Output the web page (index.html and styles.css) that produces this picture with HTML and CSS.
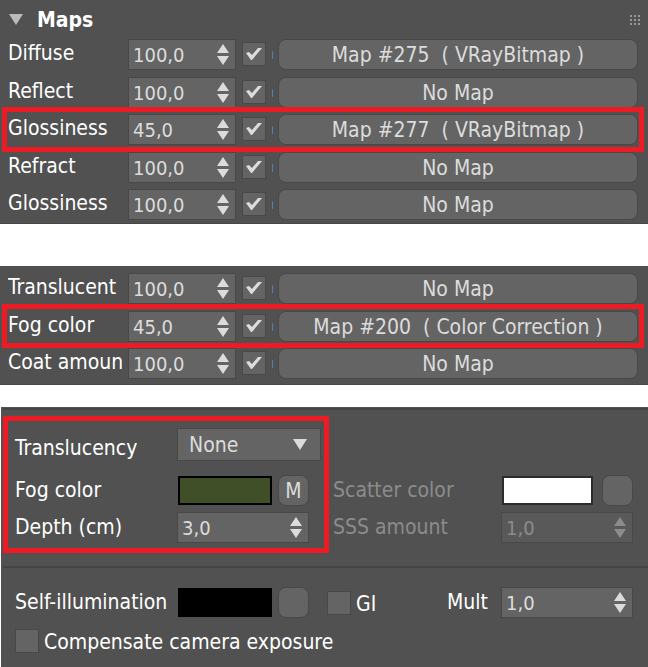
FILE: index.html
```html
<!DOCTYPE html>
<html lang="en">
<head>
<meta charset="utf-8">
<title>Material maps</title>
<link rel="stylesheet" href="styles.css">
</head>
<body>
<svg class="defs" aria-hidden="true">
  <symbol id="up" viewBox="0 0 12 9"><path d="M6 0 12 9H0Z" fill="currentColor"/></symbol>
  <symbol id="down" viewBox="0 0 12 9"><path d="M0 0H12L6 9Z" fill="currentColor"/></symbol>
</svg>

<section class="panel" id="maps">
  <header class="head">
    <svg class="fold" viewBox="0 0 14 11" aria-hidden="true"><path d="M0 0H14L7 11Z" fill="currentColor"/></svg>
    <h2>Maps</h2>
    <svg class="grip" viewBox="0 0 10 10" aria-hidden="true"><path d="M0 0h2v2H0zM4 0h2v2H4zM8 0h2v2H8zM0 4h2v2H0zM4 4h2v2H4zM8 4h2v2H8zM0 8h2v2H0zM4 8h2v2H4zM8 8h2v2H8z" fill="currentColor"/></svg>
  </header>
  <div class="rows"></div>
</section>

<section class="panel more" id="more">
  <div class="rows"></div>
</section>

<section class="panel volume">
  <div class="columns">
    <div class="group marked">
      <label for="translucency">Translucency</label>
      <div class="select">
        <select id="translucency"><option>None</option></select>
        <svg viewBox="0 0 14 11" aria-hidden="true"><path d="M0 0H14L7 11Z" fill="currentColor"/></svg>
      </div>
      <label for="fog">Fog color</label>
      <div class="pick"><button class="swatch fog" id="fog" aria-label="Fog color"></button><button class="slot">M</button></div>
      <label for="depth">Depth (cm)</label>
      <div class="spin" data-id="depth" data-value="3,0"></div>
    </div>
    <div class="group dim">
      <label for="scatter">Scatter color</label>
      <div class="pick"><button class="swatch scatter" id="scatter" aria-label="Scatter color"></button><button class="slot" aria-label="Scatter map"></button></div>
      <label for="sss">SSS amount</label>
      <div class="spin" data-id="sss" data-value="1,0"></div>
    </div>
  </div>
  <div class="self">
    <div class="line">
      <label class="name" for="selfcolor">Self-illumination</label>
      <div class="pick"><button class="swatch" id="selfcolor" aria-label="Self-illumination color"></button><button class="slot" aria-label="Self-illumination map"></button></div>
      <div class="option"><input type="checkbox" id="gi"><label for="gi">GI</label></div>
      <label class="mult" for="mult">Mult</label>
      <div class="spin" data-id="mult" data-value="1,0"></div>
    </div>
    <div class="option"><input type="checkbox" id="comp"><label for="comp">Compensate camera exposure</label></div>
  </div>
</section>
<script src="script.js"></script>
</body>
</html>
```
FILE: styles.css
```css
* { box-sizing: border-box; }

body {
  margin: 0;
  background: #fff;
  color: #fff;
  font: 21px/28px "DejaVu Sans Condensed", "Noto Sans", sans-serif;
}

button, input, select { font: inherit; color: #dcdcdc; margin: 0; padding: 0; }
label { white-space: nowrap; }
.defs { display: none; }

.panel { background: #515151; }

.head { display: flex; align-items: center; height: 39px; padding: 0 8px 0 9px; }
.head h2 { flex: 1; margin: 0 0 0 14px; font: bold 21px/28px "DejaVu Sans Condensed", "Noto Sans", sans-serif; }
.fold { width: 14px; height: 11px; color: #bbb; }
.grip { width: 10px; height: 10px; color: #999; }

.rows { display: grid; grid-auto-rows: 38px 37px; border-bottom: 1px solid #474747; }
#maps .rows { height: 185px; }
#more { margin-top: 42px; padding-top: 7px; }
#more .rows { height: 112px; }

.row {
  position: relative;
  display: grid;
  grid-template-columns: 114px 108px 24px 0 1fr;
  column-gap: 6px;
  align-items: start;
  padding: 0 10px 0 8px;
}
.row > label { overflow: hidden; }
.row > input { margin-top: 3px; }
.row.marked::after {
  content: "";
  position: absolute;
  inset: -7px 4px 0 2px;
  border: 5px solid #ed1c24;
  pointer-events: none;
}

.sliver { width: 1px; height: 8px; margin-top: 12px; border-radius: 1px; background: #5a7cb5; }

.map, .slot {
  height: 31px;
  border: 1px solid #484848;
  border-radius: 8px;
  background: #646464;
  line-height: 31px;
  white-space: nowrap;
}
.slot { width: 31px; }

.spin {
  display: flex;
  align-items: center;
  height: 31px;
  padding: 0 6px 0 4px;
  border: 1px solid #484848;
  background: #646464;
  color: #dcdcdc;
}
.spin input { flex: 1; min-width: 0; height: 29px; border: 0; background: none; font-size: 20px; }
.arrows { display: grid; gap: 3px; }
.arrows button { display: block; width: 12px; height: 9px; border: 0; background: none; color: inherit; }
.arrows svg { display: block; width: 12px; height: 9px; }

input[type="checkbox"] {
  appearance: none;
  flex: none;
  width: 24px;
  height: 24px;
  border: 1px solid #484848;
  background: #646464;
}
input[type="checkbox"]:checked::before {
  content: "";
  display: block;
  width: 22px;
  height: 22px;
  background: #dcdcdc;
  clip-path: polygon(3px 10px, 6px 9px, 9px 12px, 15px 5px, 19px 5px, 9px 17px, 8px 17px);
}

.volume { margin: 22px 0 0 1px; padding-top: 1px; }
.columns { display: flex; align-items: flex-end; margin-left: 2px; padding: 6px 15px 13px 0; border-top: 2px solid #444; border-bottom: 2px solid #444; }
.group { display: grid; align-items: center; row-gap: 6px; }
.group > label, .line > label { padding-bottom: 2px; }
.group.marked {
  grid-template-columns: 162px auto;
  width: 326px;
  padding: 7px 3px 5px 7px;
  border: 5px solid #ed1c24;
}
.group.marked .select { margin-bottom: 8px; }
.group.marked .spin { width: 132px; }
.group.dim { flex: 1; grid-template-columns: 1fr 132px; padding: 0 0 10px 4px; color: #8c8c8c; }
.dim .spin { background: #595959; color: #8c8c8c; }
.dim .spin input { color: #8c8c8c; }

.select { position: relative; color: #dcdcdc; }
.select select { appearance: none; display: block; width: 100%; height: 33px; padding-left: 11px; border: 1px solid #484848; border-radius: 0; background: #646464; }
.select svg { position: absolute; right: 14px; top: 11px; width: 14px; height: 11px; pointer-events: none; }

.pick { display: flex; align-items: center; justify-content: space-between; width: 132px; padding-left: 1px; }
.swatch { width: 94px; height: 29px; border: 2px solid #000; background: #000; }
.swatch.fog { background: #414f29; }
.swatch.scatter { width: 91px; border-color: #2c2c2c; background: #fff; }

.self { display: grid; row-gap: 8px; padding: 19px 15px 13px 14px; }
.line { display: flex; align-items: center; }
.line .name { width: 162px; }
.line .option { margin-left: 18px; }
.line .mult { margin-left: auto; margin-right: 13px; }
.line .spin { width: 132px; }
.option { display: flex; align-items: center; gap: 5px; }
.option label { padding-top: 2px; }
```
FILE: script.js
```js
function spinner(el, id, value) {
  el.innerHTML =
    `<input type="text" id="${id}" value="${value}">` +
    '<div class="arrows">' +
    '<button aria-label="Increase"><svg><use href="#up"/></svg></button>' +
    '<button aria-label="Decrease"><svg><use href="#down"/></svg></button></div>';
}

const maps = [
  ["Diffuse", "100,0", "Map #275\u00a0 ( VRayBitmap )"],
  ["Reflect", "100,0", "No Map"],
  ["Glossiness", "45,0", "Map #277\u00a0 ( VRayBitmap )", true],
  ["Refract", "100,0", "No Map"],
  ["Glossiness", "100,0", "No Map"]
];
const more = [
  ["Translucent", "100,0", "No Map"],
  ["Fog color", "45,0", "Map #200\u00a0 ( Color Correction )", true],
  ["Coat amount", "100,0", "No Map"]
];

function fill(panel, list) {
  const rows = document.querySelector(`#${panel} .rows`);
  list.forEach(([name, value, map, marked], i) => {
    const row = document.createElement("div");
    row.className = marked ? "row marked" : "row";
    row.innerHTML =
      `<label for="${panel}${i}">${name}</label><div class="spin"></div>` +
      `<input type="checkbox" checked aria-label="${name} on"><span class="sliver"></span>` +
      `<button class="map">${map}</button>`;
    spinner(row.querySelector(".spin"), panel + i, value);
    rows.append(row);
  });
}

fill("maps", maps);
fill("more", more);
document.querySelectorAll(".spin[data-id]").forEach(el => spinner(el, el.dataset.id, el.dataset.value));
```
